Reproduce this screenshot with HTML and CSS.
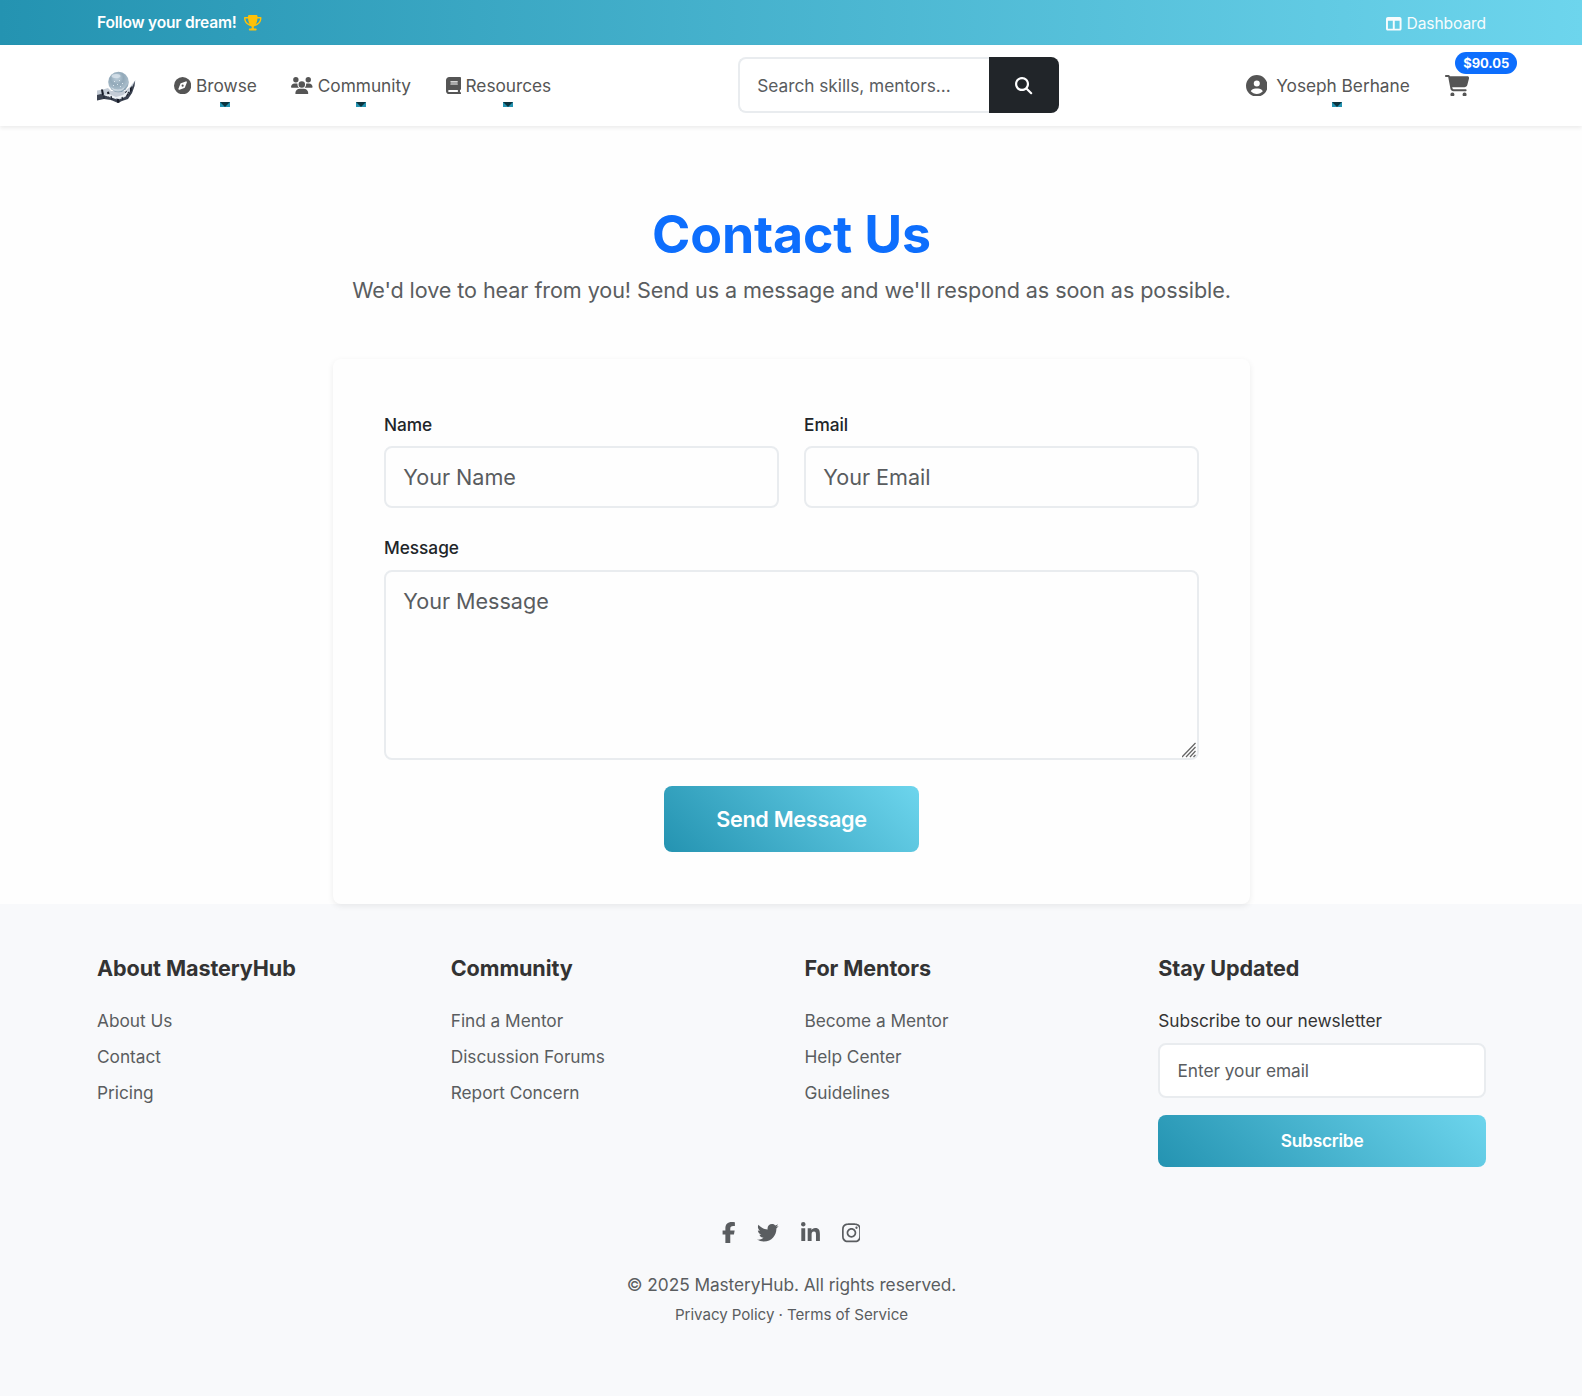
FILE: index.html
```html
<!DOCTYPE html>
<html lang="en">
<head>
<meta charset="utf-8">
<title>Contact Us - MasteryHub</title>
<link rel="stylesheet" href="styles.css">
</head>
<body>
<div class="topbar">
  <div class="container topbar-row">
    <div class="tagline">Follow your dream!
      <svg class="trophy" viewBox="0 0 576 512" fill="currentColor"><path d="M400 0H176c-26.500 0-48.100 21.800-47.100 48.200.2 5.300.4 10.600.7 15.800H24C10.700 64 0 74.700 0 88c0 92.600 33.500 157 78.500 200.700 44.300 43.100 98.300 64.800 138.100 75.800 23.400 6.500 39.400 26 39.400 45.600 0 20.900-17 37.900-37.900 37.900H192c-17.700 0-32 14.300-32 32s14.300 32 32 32h192c17.700 0 32-14.300 32-32s-14.300-32-32-32h-26.100c-20.900 0-37.900-17-37.900-37.900 0-19.600 15.900-39.200 39.400-45.600 39.900-11 93.900-32.700 138.200-75.800C542.500 245 576 180.600 576 88c0-13.300-10.700-24-24-24H446.400c.3-5.200.5-10.400.7-15.800C448.100 21.800 426.500 0 400 0zM48.900 112h84.400c9.100 90.100 29.200 150.300 51.900 190.600-24.900-11-50.800-26.500-73.200-48.300-32-31.100-58-76-63-142.300zm415.200 142.300c-22.400 21.800-48.300 37.300-73.200 48.300 22.700-40.300 42.800-100.500 51.900-190.600h84.400c-5.100 66.300-31.100 111.200-63.100 142.300z"/></svg>
    </div>
    <a class="dash"><svg class="dash-icon" viewBox="0 0 512 512" fill="currentColor"><path d="M0 96C0 60.700 28.700 32 64 32h384c35.300 0 64 28.700 64 64v320c0 35.300-28.700 64-64 64H64c-35.300 0-64-28.700-64-64V96zm64 64v256h160V160H64zm384 0H288v256h160V160z"/></svg>Dashboard</a>
  </div>
</div>

<nav class="navbar">
  <div class="container nav-row">
    <a class="logo">
      <svg viewBox="0 0 40 34">
        <defs>
          <radialGradient id="orb" cx=".42" cy=".3" r=".72"><stop offset="0" stop-color="#bfd0dc"/><stop offset=".45" stop-color="#92a9b9"/><stop offset=".8" stop-color="#a9bdcb"/><stop offset="1" stop-color="#7893a6"/></radialGradient>
        </defs>
        <path d="M0 19.500l6-1 5-1.500 3 3h14l5-4 3-4 2.500-3-1 6-2.500 7-4 5-6 2-3 2-8-3-8-1-6 2z" fill="#c4ccd6"/>
        <path d="M0 24l4-1 3 1 5 2 4 1 5 2 7-3 4-4 3-6 3-6-.5 5-2.500 7-4 6-6 2-4 2-7-3-7-1-7 1.500z" fill="#3b4250"/>
        <path d="M4 18.500l2 0 1 5-2 1zM10 21l2-.5 1 5-2 .5zM19 26l3 0 .5 5.500-2 .5zM28 21l2-1 1 4-2 1.500zM33 17l2-2-.5 5-1.500 1z" fill="#161b27"/>
        <path d="M7 24l5-1 7 3 7-2 6-5-3 6-7 3-6-1z" fill="#eef2f6"/>
        <path d="M14 25l1 4M25 26l1 3M7 25l0 3M31 21l2 2" stroke="#222a36" stroke-width="1.200"/>
        <circle cx="21.500" cy="11" r="10.300" fill="url(#orb)"/>
        <ellipse cx="19" cy="5" rx="4.500" ry="2" fill="#d9e4ec" opacity=".8"/>
        <path d="M14 16q7 5 14 0l-2 3q-5 3-10 0z" fill="#e4ebf0" opacity=".6"/>
        <path d="M17 10l1 1M22 9l1 1M25 12l1 1M20 13l1 1M16 14l1 1M23 15l1 1" stroke="#dde8ef" stroke-width="1"/>
      </svg>
    </a>
    <div class="menu">
      <a class="nav-link caret"><svg class="i16" viewBox="0 0 512 512" fill="currentColor"><path d="M256 512A256 256 0 1 0 256 0a256 256 0 1 0 0 512zm50.700-186.900L162.400 380.600c-19.400 7.500-38.500-11.600-31-31l55.500-144.300c3.300-8.500 9.900-15.100 18.400-18.400l144.300-55.500c19.400-7.500 38.500 11.600 31 31L325.100 306.700c-3.200 8.500-9.900 15.100-18.400 18.400zM288 256a32 32 0 1 0-64 0 32 32 0 1 0 64 0z"/></svg>Browse</a>
      <a class="nav-link caret"><svg class="i20" viewBox="0 0 640 512" fill="currentColor"><path d="M144 0a80 80 0 1 1 0 160A80 80 0 1 1 144 0zM512 0a80 80 0 1 1 0 160A80 80 0 1 1 512 0zM0 298.700C0 239.800 47.800 192 106.700 192h42.700c15.900 0 31 3.500 44.600 9.700-1.300 7.200-1.900 14.700-1.900 22.300 0 38.200 16.800 72.500 43.300 96H21.300C9.600 320 0 310.400 0 298.700zM405.300 320h-.7c26.600-23.500 43.300-57.800 43.300-96 0-7.600-.7-15-1.900-22.300 13.600-6.300 28.700-9.700 44.600-9.700h42.700C592.200 192 640 239.800 640 298.700c0 11.800-9.600 21.300-21.300 21.300H405.300zM224 224a96 96 0 1 1 192 0 96 96 0 1 1-192 0zM128 485.300C128 411.700 187.700 352 261.300 352h117.300C452.300 352 512 411.700 512 485.300c0 14.700-11.900 26.700-26.700 26.700H154.700c-14.700 0-26.700-11.900-26.700-26.700z"/></svg>Community</a>
      <a class="nav-link caret"><svg class="i14" viewBox="0 0 448 512" fill="currentColor"><path d="M96 0C43 0 0 43 0 96v320c0 53 43 96 96 96h320c17.700 0 32-14.300 32-32s-14.300-32-32-32v-64c17.700 0 32-14.300 32-32V32c0-17.700-14.300-32-32-32H96zm0 384h256v64H96c-17.700 0-32-14.300-32-32s14.300-32 32-32zm32-240c0-8.800 7.200-16 16-16h192c8.800 0 16 7.200 16 16s-7.200 16-16 16H144c-8.800 0-16-7.200-16-16zm16 48h192c8.800 0 16 7.200 16 16s-7.200 16-16 16H144c-8.800 0-16-7.200-16-16s7.200-16 16-16z"/></svg>Resources</a>
    </div>
    <div class="search">
      <input class="field search-field" type="text" placeholder="Search skills, mentors...">
      <button class="search-btn"><svg class="i16" viewBox="0 0 512 512" fill="currentColor"><path d="M416 208c0 45.900-14.900 88.300-40 122.700l126.600 126.700c12.500 12.500 12.500 32.800 0 45.300s-32.800 12.500-45.300 0L330.700 376c-34.400 25.200-76.800 40-122.700 40C93.100 416 0 322.900 0 208S93.100 0 208 0s208 93.100 208 208zM208 352a144 144 0 1 0 0-288 144 144 0 1 0 0 288z"/></svg></button>
    </div>
    <div class="account">
      <a class="nav-link caret user"><svg class="user-icon" viewBox="0 0 512 512" fill="currentColor"><path d="M399 384.200C376.900 345.800 335.400 320 288 320h-64c-47.400 0-88.900 25.800-111 64.200 35.200 39.200 86.200 63.800 143 63.800s107.800-24.700 143-63.800zM0 256a256 256 0 1 1 512 0A256 256 0 1 1 0 256zm256 16a72 72 0 1 0 0-144 72 72 0 1 0 0 144z"/></svg>Yoseph Berhane</a>
      <a class="cart"><svg class="cart-icon" viewBox="0 0 576 512" fill="currentColor"><path d="M0 24C0 10.700 10.700 0 24 0h45.500c22 0 41.500 12.800 50.600 32h411c26.300 0 45.500 25 38.600 50.400l-41 152.300c-8.500 31.400-37 53.300-69.500 53.300H170.700l5.400 28.500c2.200 11.300 12.100 19.500 23.600 19.500H488c13.300 0 24 10.700 24 24s-10.700 24-24 24H199.700c-34.600 0-64.300-24.600-70.700-58.500L77.400 54.500c-.7-3.800-4-6.500-7.900-6.500H24C10.700 48 0 37.300 0 24zm128 440a48 48 0 1 1 96 0 48 48 0 1 1-96 0zm336-48a48 48 0 1 1 0 96 48 48 0 1 1 0-96z"/></svg><span class="badge">$90.05</span></a>
    </div>
  </div>
</nav>

<main class="contact">
  <h1>Contact Us</h1>
  <p class="lead">We'd love to hear from you! Send us a message and we'll respond as soon as possible.</p>
  <form class="card">
    <div class="pair">
      <label class="group"><span class="label">Name</span><input class="field large" type="text" placeholder="Your Name"></label>
      <label class="group"><span class="label">Email</span><input class="field large" type="text" placeholder="Your Email"></label>
    </div>
    <label class="group message"><span class="label">Message</span><textarea class="field large area" placeholder="Your Message"></textarea><svg class="grip" viewBox="0 0 14 16" fill="none" stroke="#666" stroke-width="1.250"><path d="M0 15L13.500 1M4 15l9.500-10M8 15l5.500-6M11.500 15l2-2.200"/></svg></label>
    <button class="btn send" type="button">Send Message</button>
  </form>
</main>

<footer class="footer">
  <div class="container cols">
    <section><h5>About MasteryHub</h5><ul><li>About Us</li><li>Contact</li><li>Pricing</li></ul></section>
    <section><h5>Community</h5><ul><li>Find a Mentor</li><li>Discussion Forums</li><li>Report Concern</li></ul></section>
    <section><h5>For Mentors</h5><ul><li>Become a Mentor</li><li>Help Center</li><li>Guidelines</li></ul></section>
    <section class="newsletter"><h5>Stay Updated</h5><label class="news-label">Subscribe to our newsletter</label><input class="field news-field" type="text" placeholder="Enter your email"><button class="btn subscribe">Subscribe</button></section>
  </div>
  <div class="social">
    <svg class="s-fb" viewBox="0 0 320 512" fill="currentColor"><path d="M80 299.300V512h116V299.300h86.500l18-97.800H196v-34.600c0-51.700 20.300-71.500 72.700-71.500 16.300 0 29.400.4 37 1.200V7.900C291.400 4 256.400 0 236.200 0 129.300 0 80 50.500 80 159.400v42.100H14v97.800h66z"/></svg>
    <svg class="s-tw" viewBox="0 0 512 512" fill="currentColor"><path d="M459.370 151.716c.325 4.548.325 9.097.325 13.645 0 138.720-105.583 298.558-298.558 298.558-59.452 0-114.680-17.219-161.137-47.106 8.447.974 16.568 1.299 25.340 1.299 49.055 0 94.213-16.568 130.274-44.832-46.132-.975-84.792-31.188-98.112-72.772 6.498.974 12.995 1.624 19.818 1.624 9.421 0 18.843-1.300 27.614-3.573-48.081-9.747-84.143-51.980-84.143-102.985v-1.299c13.969 7.797 30.214 12.670 47.431 13.319-28.264-18.843-46.781-51.005-46.781-87.391 0-19.492 5.197-37.360 14.294-52.954 51.655 63.675 129.300 105.258 216.365 109.807-1.624-7.797-2.599-15.918-2.599-24.040 0-57.828 46.782-104.934 104.934-104.934 30.213 0 57.502 12.670 76.670 33.137 23.715-4.548 46.456-13.320 66.599-25.340-7.798 24.366-24.366 44.833-46.132 57.827 21.117-2.273 41.584-8.122 60.426-16.243-14.292 20.791-32.161 39.308-52.628 54.253z"/></svg>
    <svg class="s-in" viewBox="0 0 448 512" fill="currentColor"><path d="M100.280 448H7.400V148.900h92.880zM53.790 108.100C24.090 108.100 0 83.500 0 53.800a53.790 53.790 0 0 1 107.580 0c0 29.700-24.100 54.300-53.790 54.300zM447.900 448h-92.680V302.400c0-34.700-.7-79.200-48.290-79.200-48.290 0-55.690 37.700-55.690 76.700V448h-92.780V148.900h89.080v40.800h1.300c12.400-23.500 42.690-48.300 87.880-48.300 94 0 111.280 61.900 111.280 142.300V448z"/></svg>
    <svg class="s-ig" viewBox="0 0 448 512" fill="currentColor"><path d="M224.100 141c-63.600 0-114.900 51.300-114.900 114.900s51.300 114.900 114.900 114.900S339 319.500 339 255.900 287.700 141 224.100 141zm0 189.600c-41.100 0-74.700-33.500-74.700-74.700s33.500-74.700 74.700-74.700 74.700 33.500 74.700 74.700-33.600 74.700-74.700 74.700zm146.400-194.300c0 14.900-12 26.800-26.800 26.800-14.900 0-26.800-12-26.800-26.800s12-26.800 26.800-26.800 26.800 12 26.800 26.800zm76.100 27.200c-1.700-35.900-9.900-67.700-36.200-93.900-26.200-26.200-58-34.400-93.900-36.200-37-2.100-147.900-2.100-184.900 0-35.800 1.700-67.600 9.900-93.900 36.100s-34.400 58-36.200 93.900c-2.100 37-2.100 147.900 0 184.900 1.700 35.900 9.900 67.700 36.200 93.900s58 34.400 93.900 36.200c37 2.100 147.900 2.100 184.900 0 35.900-1.700 67.700-9.900 93.900-36.200 26.200-26.200 34.400-58 36.200-93.900 2.100-37 2.100-147.800 0-184.800zM398.800 388c-7.800 19.600-22.900 34.700-42.600 42.600-29.500 11.700-99.500 9-132.100 9s-102.700 2.600-132.100-9c-19.600-7.800-34.700-22.900-42.600-42.600-11.700-29.500-9-99.500-9-132.100s-2.600-102.700 9-132.100c7.800-19.600 22.900-34.700 42.600-42.600 29.500-11.700 99.500-9 132.100-9s102.700-2.600 132.100 9c19.600 7.800 34.700 22.900 42.600 42.600 11.700 29.500 9 99.500 9 132.100s2.700 102.700-9 132.100z"/></svg>
  </div>
  <p class="copy">© 2025 MasteryHub. All rights reserved.</p>
  <p class="legal">Privacy Policy · Terms of Service</p>
</footer>
</body>
</html>
```
FILE: styles.css
```css
* { box-sizing: border-box; }
html { font-size: 17.28px; }
body {
  margin: 0;
  font-family: Inter, "Liberation Sans", sans-serif;
  font-size: 1rem;
  line-height: 1.6;
  letter-spacing: -0.0015em;
  color: #212529;
  background: #fefefe;
}
h1, h5, p, ul { margin: 0; padding: 0; }
ul { list-style: none; }
svg { display: block; flex: none; }
input, button, textarea { font-family: inherit; letter-spacing: inherit; margin: 0; }
.container { width: 1389px; margin: 0 0 0 97px; }

.topbar { height: 45px; background: linear-gradient(90deg, #2493b1, #6dd5ed); color: #fff; }
.topbar-row { display: flex; justify-content: space-between; align-items: center; height: 45px; }
.tagline { display: flex; align-items: center; gap: 7.600px; font-size: 15.55px; font-weight: 600; padding-top: 1px; letter-spacing: -0.013em; }
.trophy { width: 17.5px; height: 15.55px; color: #ffc107; }
.dash { display: flex; align-items: center; gap: 4.5px; font-size: 15.55px; padding-top: 3px; opacity: .95; letter-spacing: -0.005em; }
.dash-icon { width: 15.55px; height: 15.55px; }

.navbar { height: 81px; background: #fff; box-shadow: 0 2px 4px rgba(0, 0, 0, .075); }
.nav-row { display: flex; align-items: center; height: 81px; }
.logo { width: 40px; margin-right: 37px; padding-top: 4px; }
.logo svg { width: 40px; height: 34px; }
.menu { display: flex; gap: 34.600px; width: 564px; }
.nav-link { position: relative; display: flex; align-items: center; gap: 4.800px; color: #555; white-space: nowrap; }
.caret::after {
  content: "";
  position: absolute;
  left: calc(50% + 4.500px);
  top: 30px;
  border: 5px solid #2493b1;
  border-top-color: #0b3440;
  border-bottom: 0;
}
.i16 { width: 17.28px; height: 17.28px; }
.i20 { width: 21.600px; height: 17.28px; }
.i14 { width: 15.120px; height: 17.28px; }
.search { display: flex; width: 321px; height: 56px; margin-bottom: 1px; }
.field {
  border: 2px solid #e9ecef;
  border-radius: 8px;
  background: #fff;
  padding: 0 17.28px;
  font-size: 17.28px;
  color: #212529;
  outline: 0;
  width: 100%;
}
.field::placeholder { color: #595c5f; opacity: 1; }
.search-field { width: 251px; border-right: 0; border-radius: 8px 0 0 8px; }
.search-btn { width: 70px; border: 0; padding: 2px 0 0; border-radius: 0 8px 8px 0; background: #212529; color: #fff; display: flex; align-items: center; justify-content: center; }
.account { display: flex; align-items: center; margin-left: auto; }
.user { gap: 9px; margin-right: 34.800px; }
.user-icon { width: 21.600px; height: 21.600px; }
.cart { position: relative; color: #555; margin-right: 17.200px; }
.cart-icon { width: 24.300px; height: 21.600px; }
.badge {
  position: absolute;
  left: 10.700px;
  top: -23px;
  width: 62px;
  height: 22px;
  border-radius: 11px;
  background: #0d6efd;
  color: #fff;
  font-size: 12.960px;
  font-weight: 700;
  line-height: 22px;
  text-align: center;
}

.contact { display: flex; flex-direction: column; align-items: center; padding: 78px 0 0 1px; }
h1 { font-size: 51.840px; font-weight: 700; line-height: 62px; letter-spacing: -0.003em; color: #0d6efd; }
.lead { margin-top: 7px; font-size: 21.600px; line-height: 35px; letter-spacing: -0.004em; color: #5a5d60; }
.card {
  position: relative;
  width: 917px;
  height: 545px;
  margin-top: 51px;
  padding: 52px 51px;
  border-radius: 8px;
  background: #fefefe;
  box-shadow: 0 2px 6px rgba(0, 0, 0, .075);
  display: flex;
  flex-direction: column;
}
.pair { display: grid; grid-template-columns: 1fr 1fr; gap: 25px; }
.group { display: block; }
.label { display: block; height: 35px; line-height: 28px; font-size: 17.28px; font-weight: 500; letter-spacing: -0.002em; }
.large { display: block; height: 62px; font-size: 21.600px; background: #fefefe; }
.message { position: relative; margin-top: 26px; }
.area { height: 190px; margin-top: 1px; padding-top: 13px; line-height: 32px; resize: none; }
.grip { position: absolute; right: 3px; bottom: 2px; width: 14px; height: 16px; }
.btn { border: 0; border-radius: 8px; background: linear-gradient(45deg, #2493b1, #6dd5ed); color: #fff; font-weight: 600; letter-spacing: -0.013em; }
.send { align-self: center; width: 255px; height: 66px; margin-top: 26px; font-size: 21.600px; }

.footer { height: 492px; background: #f8f9fb; padding-top: 50px; }
.cols { display: grid; grid-template-columns: repeat(4, 1fr); column-gap: 25.900px; height: 213px; }
h5 { font-size: 21.600px; line-height: 28px; font-weight: 700; color: #333; letter-spacing: -0.004em; }
.cols ul { padding-top: 21px; }
.cols li { height: 36px; line-height: 36px; color: #5a5d60; }
.newsletter { display: flex; flex-direction: column; }
.news-label { margin-top: 25px; line-height: 28px; color: #333; }
.news-field { height: 55px; margin-top: 8px; flex: none; }
.subscribe { height: 52px; margin-top: 17px; padding-bottom: 2px; font-size: 17.28px; flex: none; }
.social { display: flex; justify-content: center; align-items: center; gap: 22px; height: 28px; margin-top: 51px; padding-top: 1px; color: #5a5d60; }
.s-fb { width: 13.500px; height: 21.600px; }
.s-tw { width: 21.600px; height: 21.600px; }
.s-in, .s-ig { width: 18.900px; height: 21.600px; }
.copy { margin-top: 25px; padding-left: 1px; text-align: center; line-height: 28px; letter-spacing: -0.003em; color: #5a5d60; }
.legal { margin-top: 4px; padding-left: 1px; text-align: center; font-size: 15.120px; line-height: 24px; letter-spacing: -0.003em; color: #5a5d60; }
```
